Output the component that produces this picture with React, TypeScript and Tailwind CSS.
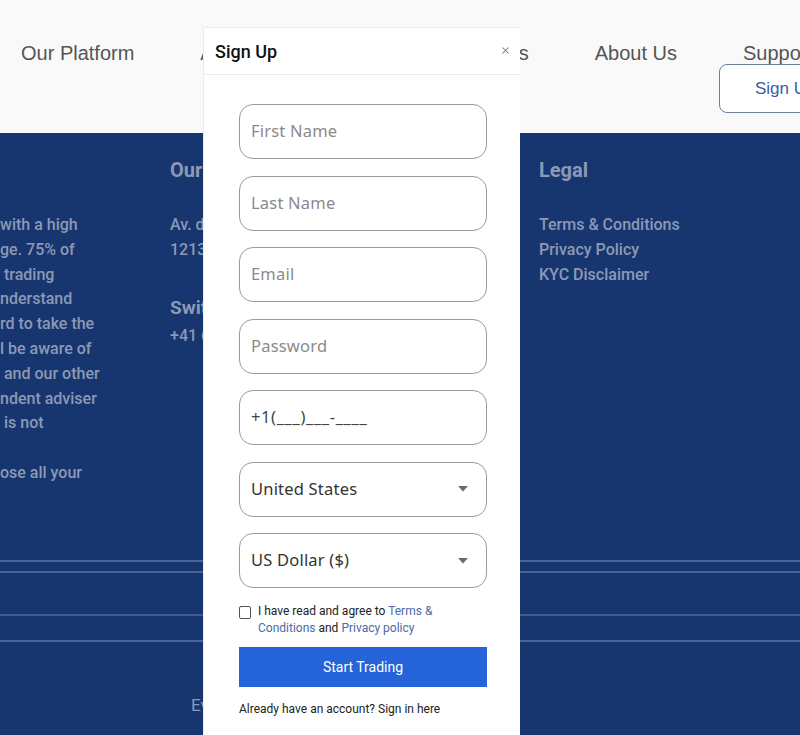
import { X } from 'lucide-react'

const navItems = ['Our Platform', 'Account Types', 'Trading Assets', 'About Us', 'Support']

const riskLines = [
  'with a high',
  'ge. 75% of',
  ' trading',
  'nderstand',
  'rd to take the',
  'l be aware of',
  ' and our other',
  'ndent adviser',
  ' is not',
  '\u00a0',
  'ose all your',
]

const fields = ['First Name', 'Last Name', 'Email', 'Password']

function Caret() {
  return (
    <svg width="10" height="6" viewBox="0 0 10 6" className="shrink-0">
      <path d="M0 0h10L5 5.5z" fill="#6b6b6b" />
    </svg>
  )
}

function SignUpModal() {
  return (
    <div className="absolute left-[203px] top-[27px] w-[317px] bg-white border-l border-t border-[#ececec] font-['Roboto',sans-serif]">
      <div className="relative flex h-[47px] items-center border-b border-[#ececec] pl-[11px]">
        <h2 className="text-[18px] font-medium text-[#111]">Sign Up</h2>
        <X className="absolute right-[9px] top-[17px] h-[11px] w-[11px] text-[#777]" strokeWidth={2.2} />
      </div>

      <div className="flex flex-col px-[35px] pb-[30px] pt-[29px] font-['Noto_Sans',sans-serif]">
        <div className="flex flex-col gap-[16.5px]">
          {fields.map((f) => (
            <div
              key={f}
              className="flex h-[55px] w-[248px] items-center rounded-[14px] border border-[#9a9a9a] px-[11px] text-[16.5px] tracking-[0.2px] text-[#8a8a8a]"
            >
              {f}
            </div>
          ))}
          <div className="flex h-[55px] w-[248px] items-center rounded-[14px] border border-[#9a9a9a] px-[11px] text-[16.5px] tracking-[0.6px] text-[#444]">
            +1(___)___-____
          </div>
          <div className="flex h-[55px] w-[248px] items-center justify-between rounded-[14px] border border-[#9a9a9a] pl-[11px] pr-[18px] text-[16.5px] tracking-[0.2px] text-[#333]">
            <span>United States</span>
            <Caret />
          </div>
          <div className="flex h-[55px] w-[248px] items-center justify-between rounded-[14px] border border-[#9a9a9a] pl-[11px] pr-[18px] text-[16.5px] tracking-[0.2px] text-[#333]">
            <span>US Dollar ($)</span>
            <Caret />
          </div>
        </div>

        <div className="mt-[15px] flex items-start gap-[7px] font-['Roboto',sans-serif] text-[12px] leading-[17px] text-[#222]">
          <span className="mt-[3px] h-[13px] w-[12px] shrink-0 rounded-[2px] border border-[#555]" />
          <p>
            I have read and agree to <span className="text-[#4a6aa8]">Terms &amp; Conditions</span> and{' '}
            <span className="text-[#4a6aa8]">Privacy policy</span>
          </p>
        </div>

        <button
          type="button"
          className="mt-[10px] h-[40px] w-[248px] bg-[#2563d8] font-['Roboto',sans-serif] text-[14px] text-white"
        >
          Start Trading
        </button>

        <p className="mt-[13px] font-['Roboto',sans-serif] text-[12px] text-[#222]">
          Already have an account? Sign in here
        </p>
      </div>
    </div>
  )
}

export default function App() {
  return (
    <div className="relative h-[735px] w-[800px] overflow-hidden bg-[#17366f]">
      <header className="h-[133px] bg-[#f9f9f9] font-['Liberation_Sans',Arial,sans-serif]">
        <nav className="flex gap-[66px] whitespace-nowrap pl-[21px] pt-[42px] text-[20px] leading-[22px] text-[#555]">
          {navItems.map((n) => (
            <span key={n}>{n}</span>
          ))}
        </nav>
        <div className="pl-[719px]">
          <button
            type="button"
            className="flex h-[49px] w-[130px] items-center rounded-[8px] border border-[#6d7f9c] bg-white pl-[35px] text-[17px] text-[#3b5ba5]"
          >
            Sign Up
          </button>
        </div>
      </header>

      <footer className="font-['Roboto',sans-serif] font-medium text-[#8c99b5]">
        <div className="flex h-[410px] pt-[25px]">
          <div className="w-[170px] pt-[55px] text-[16px] leading-[24.8px] whitespace-pre">
            {riskLines.map((l, i) => (
              <div key={i}>{l}</div>
            ))}
          </div>
          <div className="w-[369px]">
            <h3 className="text-[20px] font-bold leading-[24px]">Our Office</h3>
            <div className="mt-[31px] text-[16px] leading-[24.8px]">
              <div>Av. de la Gare 10</div>
              <div>1213 Geneva</div>
            </div>
            <h3 className="mt-[33px] text-[19px] font-bold leading-[24px]">Switzerland</h3>
            <div className="mt-[4px] text-[16px] leading-[24px]">+41 61 000 0000</div>
          </div>
          <div>
            <h3 className="text-[20px] font-bold leading-[24px]">Legal</h3>
            <ul className="mt-[31px] text-[16px] leading-[24.8px]">
              <li>Terms &amp; Conditions</li>
              <li>Privacy Policy</li>
              <li>KYC Disclaimer</li>
            </ul>
          </div>
        </div>

        <div className="mt-[17px] border-t-2 border-[#4b6498]" />
        <div className="mt-[9px] border-t-2 border-[#4b6498]" />
        <div className="mt-[41px] border-t-2 border-[#3f5a90]" />
        <div className="mt-[24px] border-t-2 border-[#4b6498]" />

        <p className="pl-[191px] pt-[51px] text-[17px] font-normal text-[#8c99b5]">
          Every investment involves risk.
        </p>
      </footer>

      <SignUpModal />
    </div>
  )
}
